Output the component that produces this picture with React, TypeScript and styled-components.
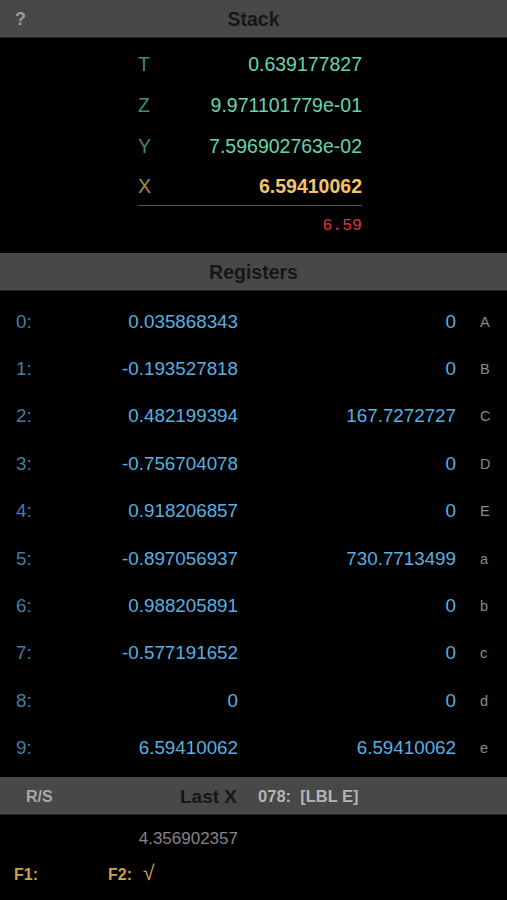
import React from 'react'
import styled, { createGlobalStyle } from 'styled-components'

const GlobalStyle = createGlobalStyle`
  html, body {
    margin: 0;
    padding: 0;
    background: #000;
  }
  body {
    font-family: "Liberation Sans", Arial, sans-serif;
  }
`

const Screen = styled.div`
  width: 507px;
  height: 900px;
  background: #000;
  overflow: hidden;
`

const TitleBar = styled.div`
  height: 38px;
  padding-top: 2px;
  box-sizing: border-box;
  background: #484848;
  border-bottom: 1px solid #262626;
  display: grid;
  grid-template-columns: 1fr auto 1fr;
  align-items: center;
`

const Title = styled.div`
  font-size: 19.5px;
  font-weight: bold;
  color: #161616;
  text-align: center;
`

const HelpButton = styled.div`
  padding-left: 15px;
  font-size: 18px;
  font-weight: bold;
  color: #9a9a9a;
`

const StackPanel = styled.div`
  height: 215px;
  padding-top: 6px;
  box-sizing: border-box;
`

const StackBox = styled.div`
  margin-left: 138px;
  width: 224px;
`

const StackRow = styled.div<{ $x?: boolean }>`
  height: ${p => (p.$x ? '39px' : '41px')};
  display: flex;
  align-items: center;
  justify-content: space-between;
  font-size: 19.5px;
  box-sizing: border-box;
  border-bottom: ${p => (p.$x ? '1px solid #575757' : 'none')};
`

const StackLabel = styled.span<{ $x?: boolean }>`
  color: ${p => (p.$x ? '#a98a3e' : '#3d8d72')};
`

const StackValue = styled.span<{ $x?: boolean }>`
  color: ${p => (p.$x ? '#f3c56b' : '#67d6ab')};
  font-weight: ${p => (p.$x ? 'bold' : 'normal')};
`

const Entry = styled.div`
  margin-top: 10px;
  text-align: right;
  font-family: "Liberation Mono", "DejaVu Sans Mono", monospace;
  font-size: 16.5px;
  line-height: 20px;
  color: #d83838;
`

const RegisterList = styled.div`
  padding-top: 7px;
  height: 486px;
  box-sizing: border-box;
`

const RegisterRow = styled.div`
  height: 47.4px;
  display: grid;
  grid-template-columns: 60px 162px 218px 1fr;
  align-items: center;
  padding-left: 16px;
  font-size: 18.8px;
`

const RegIndex = styled.span`
  color: #447ea3;
`

const RegValue = styled.span`
  color: #5aafe0;
  text-align: right;
`

const RegLetter = styled.span`
  padding-left: 24px;
  font-size: 14.5px;
  color: #8a8a8a;
`

const StatusBar = styled.div`
  height: 38px;
  padding-top: 2px;
  box-sizing: border-box;
  background: #484848;
  border-bottom: 1px solid #262626;
  display: flex;
  align-items: center;
  font-weight: bold;
`

const RunStop = styled.span`
  width: 154px;
  padding-left: 26px;
  font-size: 16px;
  color: #a9a9a9;
`

const StatusTitle = styled.span`
  font-size: 19px;
  color: #161616;
`

const ProgramLine = styled.span`
  margin-left: 21px;
  font-size: 16.5px;
  color: #b4b4b4;
  white-space: pre;
`

const LastX = styled.div`
  margin-top: 13px;
  width: 238px;
  text-align: right;
  font-size: 17px;
  line-height: 22px;
  color: #858585;
`

const FunctionRow = styled.div`
  margin-top: 11px;
  display: flex;
  align-items: baseline;
  font-size: 16px;
  font-weight: bold;
  color: #c9a253;
`

const FunctionKey = styled.span<{ $width: number; $pad: number }>`
  width: ${p => p.$width}px;
  padding-left: ${p => p.$pad}px;
  box-sizing: border-box;
`

const Root = styled.span`
  font-weight: normal;
  font-size: 21px;
  margin-left: 11px;
`

const stack = [
  { label: 'T', value: '0.639177827' },
  { label: 'Z', value: '9.971101779e-01' },
  { label: 'Y', value: '7.596902763e-02' },
]

const registers = [
  ['0:', '0.035868343', '0', 'A'],
  ['1:', '-0.193527818', '0', 'B'],
  ['2:', '0.482199394', '167.7272727', 'C'],
  ['3:', '-0.756704078', '0', 'D'],
  ['4:', '0.918206857', '0', 'E'],
  ['5:', '-0.897056937', '730.7713499', 'a'],
  ['6:', '0.988205891', '0', 'b'],
  ['7:', '-0.577191652', '0', 'c'],
  ['8:', '0', '0', 'd'],
  ['9:', '6.59410062', '6.59410062', 'e'],
]

const App = () => {
  return (
    <Screen>
      <GlobalStyle />
      <TitleBar>
        <HelpButton>?</HelpButton>
        <Title>Stack</Title>
        <div />
      </TitleBar>

      <StackPanel>
        <StackBox>
          {stack.map(s => (
            <StackRow key={s.label}>
              <StackLabel>{s.label}</StackLabel>
              <StackValue>{s.value}</StackValue>
            </StackRow>
          ))}
          <StackRow $x>
            <StackLabel $x>X</StackLabel>
            <StackValue $x>6.59410062</StackValue>
          </StackRow>
          <Entry>6.59</Entry>
        </StackBox>
      </StackPanel>

      <TitleBar>
        <div />
        <Title>Registers</Title>
        <div />
      </TitleBar>

      <RegisterList>
        {registers.map(r => (
          <RegisterRow key={r[0]}>
            <RegIndex>{r[0]}</RegIndex>
            <RegValue>{r[1]}</RegValue>
            <RegValue>{r[2]}</RegValue>
            <RegLetter>{r[3]}</RegLetter>
          </RegisterRow>
        ))}
      </RegisterList>

      <StatusBar>
        <RunStop>R/S</RunStop>
        <StatusTitle>Last X</StatusTitle>
        <ProgramLine>078:  [LBL E]</ProgramLine>
      </StatusBar>

      <LastX>4.356902357</LastX>
      <FunctionRow>
        <FunctionKey $width={108} $pad={14}>F1:</FunctionKey>
        <FunctionKey $width={120} $pad={0}>
          F2:<Root>√</Root>
        </FunctionKey>
      </FunctionRow>
    </Screen>
  )
}

export default App
